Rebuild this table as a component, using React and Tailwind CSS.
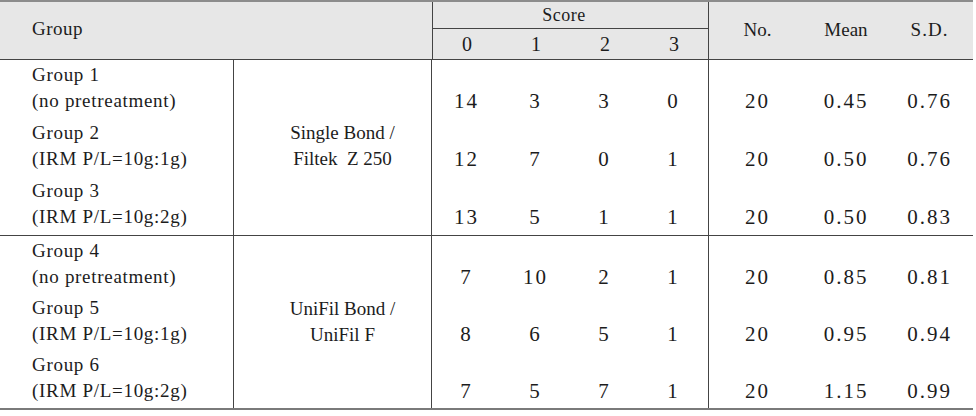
import React from "react";

const cols = "grid grid-cols-[233px_199px_69px_69px_69px_69px_98px_80px_87px]";

const sections = [
  {
    bond: ["Single Bond /", "Filtek\u00a0\u00a0Z 250"],
    rows: "grid-rows-[58px_58px_59px]",
    groups: [
      { name: "Group 1", sub: "(no pretreatment)", v: ["14", "3", "3", "0", "20", "0.45", "0.76"] },
      { name: "Group 2", sub: "(IRM P/L=10g:1g)", v: ["12", "7", "0", "1", "20", "0.50", "0.76"] },
      { name: "Group 3", sub: "(IRM P/L=10g:2g)", v: ["13", "5", "1", "1", "20", "0.50", "0.83"] },
    ],
  },
  {
    bond: ["UniFil Bond /", "UniFil F"],
    rows: "grid-rows-[57px_57px_58px]",
    groups: [
      { name: "Group 4", sub: "(no pretreatment)", v: ["7", "10", "2", "1", "20", "0.85", "0.81"] },
      { name: "Group 5", sub: "(IRM P/L=10g:1g)", v: ["8", "6", "5", "1", "20", "0.95", "0.94"] },
      { name: "Group 6", sub: "(IRM P/L=10g:2g)", v: ["7", "5", "7", "1", "20", "1.15", "0.99"] },
    ],
  },
];

const numCols = [
  "col-start-3",
  "col-start-4",
  "col-start-5",
  "col-start-6",
  "col-start-7 border-l border-[#444]",
  "col-start-8",
  "col-start-9",
];

const rowStarts = ["row-start-1", "row-start-2", "row-start-3"];

export default function App() {
  return (
    <div className="w-[976px] h-[416px] bg-white text-[#1c1c1c] font-[family-name:'Liberation_Serif','DejaVu_Serif',serif] text-[19px]">
      <div className="w-[973px]">
        {/* Header */}
        <div className={`${cols} h-[60px] bg-[#e7e7e7] border-t-2 border-[#8c8c8c] border-b border-b-[#444]`}>
          <div className="col-span-2 flex items-center pl-[32px] pb-[2px] tracking-[0.5px]">Group</div>
          <div className="col-span-4 border-l border-[#444] grid grid-rows-[27px_30px]">
            <div className="flex items-center justify-center border-b border-[#444] text-[18px] pr-[14px] tracking-[0.5px]">Score</div>
            <div className="grid grid-cols-[69px_69px_69px_69px] text-[20px] tracking-[1px]">
              {["0", "1", "2", "3"].map((s) => (
                <div key={s} className="flex items-center justify-center">{s}</div>
              ))}
            </div>
          </div>
          <div className="border-l border-[#444] flex items-center justify-center">No.</div>
          <div className="flex items-center justify-center">Mean</div>
          <div className="flex items-center justify-center tracking-[1px]">S.D.</div>
        </div>

        {/* Body */}
        {sections.map((sec, si) => (
          <div
            key={si}
            className={`${cols} ${sec.rows} ${si === 0 ? "border-b border-[#444]" : "border-b-2 border-[#7a7a7a]"}`}
          >
            <div className="col-start-2 row-start-1 row-span-3 border-l border-r border-[#444] flex flex-col items-center pl-[20px] pt-[60px] leading-[26px]">
              <div>{sec.bond[0]}</div>
              <div>{sec.bond[1]}</div>
            </div>
            {sec.groups.map((g, gi) => (
              <React.Fragment key={gi}>
                <div className={`col-start-1 ${rowStarts[gi]} pl-[32px] pt-[2px] leading-[26px] tracking-[0.7px]`}>
                  <div>{g.name}</div>
                  <div>{g.sub}</div>
                </div>
                {g.v.map((val, vi) => (
                  <div
                    key={vi}
                    className={`${numCols[vi]} ${rowStarts[gi]} flex justify-center pt-[28px] leading-[26px] text-[21px] tracking-[2px]`}
                  >
                    {val}
                  </div>
                ))}
              </React.Fragment>
            ))}
          </div>
        ))}
      </div>
    </div>
  );
}
